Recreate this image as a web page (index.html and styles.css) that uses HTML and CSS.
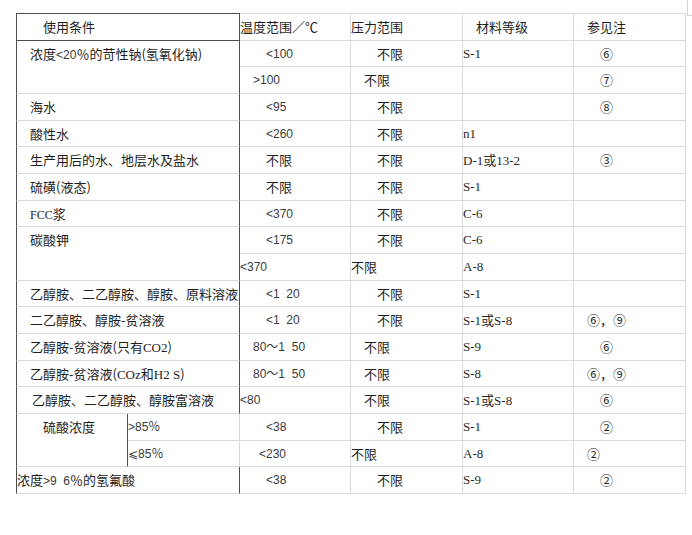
FILE: index.html
```html
<!DOCTYPE html>
<html lang="zh-CN">
<head>
<meta charset="utf-8">
<title>使用条件</title>
<link rel="stylesheet" href="styles.css">
</head>
<body>
<div class="corner"></div>
<table class="grid">
  <colgroup>
    <col class="ca"><col class="cb"><col class="c2"><col class="c3"><col class="c4"><col class="c5">
  </colgroup>
  <tr class="head">
    <td colspan="2" class="cond in2">使用条件</td>
    <td class="in0">温度范围／℃</td>
    <td class="in0">压力范围</td>
    <td class="in1">材料等级</td>
    <td class="in1">参见注</td>
  </tr>
  <tr>
    <td colspan="2" rowspan="2" class="cond in1">浓度<span class="ls">&lt;20</span>％的苛性钠(氢氧化钠)</td>
    <td class="num in2">&lt;100</td>
    <td class="in2">不限</td>
    <td class="mat">S-1</td>
    <td class="in2">⑥</td>
  </tr>
  <tr>
    <td class="num in1">&gt;100</td>
    <td class="in1">不限</td>
    <td class="mat"></td>
    <td class="in2">⑦</td>
  </tr>
  <tr>
    <td colspan="2" class="cond in1">海水</td>
    <td class="num in2">&lt;95</td>
    <td class="in2">不限</td>
    <td class="mat"></td>
    <td class="in2">⑧</td>
  </tr>
  <tr>
    <td colspan="2" class="cond in1">酸性水</td>
    <td class="num in2">&lt;260</td>
    <td class="in2">不限</td>
    <td class="mat">n1</td>
    <td></td>
  </tr>
  <tr>
    <td colspan="2" class="cond in1">生产用后的水、地层水及盐水</td>
    <td class="in2">不限</td>
    <td class="in2">不限</td>
    <td class="mat">D-1<span class="cj">或</span>13-2</td>
    <td class="in2">③</td>
  </tr>
  <tr>
    <td colspan="2" class="cond in1">硫磺(液态)</td>
    <td class="in2">不限</td>
    <td class="in2">不限</td>
    <td class="mat">S-1</td>
    <td></td>
  </tr>
  <tr>
    <td colspan="2" class="cond in1"><span class="lt">FCC</span>浆</td>
    <td class="num in2">&lt;370</td>
    <td class="in2">不限</td>
    <td class="mat">C-6</td>
    <td></td>
  </tr>
  <tr>
    <td colspan="2" rowspan="2" class="cond in1">碳酸钾</td>
    <td class="num in2">&lt;175</td>
    <td class="in2">不限</td>
    <td class="mat">C-6</td>
    <td></td>
  </tr>
  <tr>
    <td class="num in0">&lt;370</td>
    <td class="in0">不限</td>
    <td class="mat">A-8</td>
    <td></td>
  </tr>
  <tr>
    <td colspan="2" class="cond in1">乙醇胺、二乙醇胺、醇胺、原料溶液</td>
    <td class="num in2">&lt;1&nbsp; 20</td>
    <td class="in2">不限</td>
    <td class="mat">S-1</td>
    <td></td>
  </tr>
  <tr>
    <td colspan="2" class="cond in1">二乙醇胺、醇胺-贫溶液</td>
    <td class="num in2">&lt;1&nbsp; 20</td>
    <td class="in2">不限</td>
    <td class="mat">S-1<span class="cj">或</span>S-8</td>
    <td class="in1">⑥，⑨</td>
  </tr>
  <tr>
    <td colspan="2" class="cond in1">乙醇胺-贫溶液(只有<span class="lm">CO2</span>)</td>
    <td class="num in1">80～1&nbsp; 50</td>
    <td class="in1">不限</td>
    <td class="mat">S-9</td>
    <td class="in2">⑥</td>
  </tr>
  <tr>
    <td colspan="2" class="cond in1">乙醇胺-贫溶液(<span class="lm">COz</span>和<span class="lm">H2 S</span>)</td>
    <td class="num in1">80～1&nbsp; 50</td>
    <td class="in1">不限</td>
    <td class="mat">S-8</td>
    <td class="in1">⑥，⑨</td>
  </tr>
  <tr>
    <td colspan="2" class="cond in15">乙醇胺、二乙醇胺、醇胺富溶液</td>
    <td class="num in0">&lt;80</td>
    <td class="in1">不限</td>
    <td class="mat">S-1<span class="cj">或</span>S-8</td>
    <td class="in2">⑥</td>
  </tr>
  <tr>
    <td rowspan="2" class="cond in2">硫酸浓度</td>
    <td class="sub num in0">&gt;85％</td>
    <td class="num in2">&lt;38</td>
    <td class="in2">不限</td>
    <td class="mat">S-1</td>
    <td class="in2">②</td>
  </tr>
  <tr>
    <td class="sub num in0"><span class="le">⩽</span>85％</td>
    <td class="num in19">&lt;230</td>
    <td class="in0">不限</td>
    <td class="mat">A-8</td>
    <td class="in1">②</td>
  </tr>
  <tr>
    <td colspan="2" class="cond in0">浓度<span class="ls">&gt;9&nbsp; 6</span>％的氢氟酸</td>
    <td class="num in2">&lt;38</td>
    <td class="in2">不限</td>
    <td class="mat">S-9</td>
    <td class="in2">②</td>
  </tr>
</table>
</body>
</html>
```

FILE: styles.css
```css
html, body {
  margin: 0;
  padding: 0;
  background: #ffffff;
}

body {
  position: relative;
  width: 692px;
  height: 535px;
  overflow: hidden;
}

.corner {
  position: absolute;
  left: 687px;
  top: 0;
  width: 6px;
  height: 15px;
  border-left: 1px solid #d4d4d4;
  border-bottom: 1px solid #d4d4d4;
}

.grid {
  margin: 13px 0 0 16px;
  border-collapse: separate;
  border-spacing: 0;
  table-layout: fixed;
  width: 670px;
}

.ca { width: 112px; }
.cb { width: 112px; }
.c2 { width: 111px; }
.c3 { width: 112px; }
.c4 { width: 111px; }
.c5 { width: 112px; }

.grid tr {
  height: 26.67px;
}

.grid tr.head {
  height: 27.67px;
}

.grid td {
  box-sizing: border-box;
  padding: 5px 0 0 0;
  font-family: "Noto Sans CJK SC", sans-serif;
  font-size: 13px;
  line-height: 16px;
  color: #1e1e1e;
  vertical-align: top;
  white-space: nowrap;
  overflow: visible;
  border-right: 1px solid #dadada;
  border-bottom: 1px solid #dadada;
}

.grid tr.head td {
  border-top: 1px solid #dadada;
}

.grid td.cond {
  border-left: 1px solid #4e4e4e;
  border-right: 1px solid #4e4e4e;
}

.grid tr.head td.cond {
  border-top: 1px solid #4e4e4e;
  border-bottom: 1px solid #4e4e4e;
}

.grid td.sub {
  border-right: 1px solid #dadada;
}

.grid td.in0 { padding-left: 0; }
.grid td.in1 { padding-left: 13px; }
.grid td.in15 { padding-left: 15px; }
.grid td.in19 { padding-left: 19px; }
.grid td.in2 { padding-left: 26px; }

.grid td.num {
  font-family: "Liberation Sans", "Noto Sans CJK SC", sans-serif;
  font-size: 12px;
  color: #3a3a3a;
}

.grid td.mat {
  font-family: "Liberation Serif", "Noto Sans CJK SC", serif;
  font-size: 13px;
  color: #2a2a2a;
  padding-left: 0;
}

.cj {
  font-family: "Noto Sans CJK SC", sans-serif;
  font-size: 13px;
}

.ls {
  font-family: "Liberation Sans", sans-serif;
  font-size: 12px;
  color: #3a3a3a;
}

.lm {
  font-family: "Liberation Serif", serif;
  font-size: 13px;
}

.lt {
  font-family: "Liberation Serif", serif;
  font-size: 12px;
}

.le {
  font-family: "DejaVu Sans", sans-serif;
  font-size: 12px;
}
```
